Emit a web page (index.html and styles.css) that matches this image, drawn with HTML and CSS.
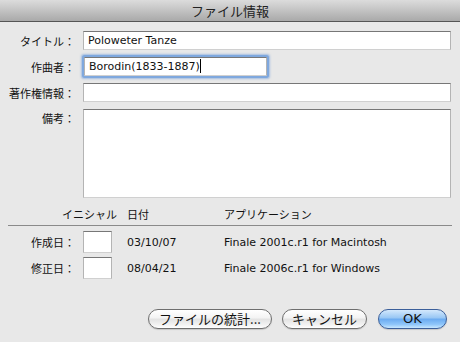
FILE: index.html
```html
<!DOCTYPE html>
<html lang="ja">
<head>
  <meta charset="UTF-8" />
  <meta name="viewport" content="width=device-width, initial-scale=1.0"/>
  <title>ファイル情報</title>
  <link rel="stylesheet" href="styles.css">
</head>
<body>
  <div class="dialog">
    <div class="titlebar">ファイル情報</div>

    <div class="form">
      <label class="label">タイトル：</label>
      <div class="field">Poloweter Tanze</div>

      <label class="label">作曲者：</label>
      <div class="field short focused">Borodin(1833-1887)<span class="caret"></span></div>

      <label class="label">著作権情報：</label>
      <div class="field"></div>

      <label class="label top">備考：</label>
      <div class="field notes"></div>
    </div>

    <div class="history">
      <div class="hist-head">
        <span></span>
        <span class="head-initial">イニシャル</span>
        <span>日付</span>
        <span>アプリケーション</span>
      </div>
      <div class="divider"></div>
      <div class="hist-row">
        <span class="label">作成日：</span>
        <span class="initial-box"></span>
        <span class="latin">03/10/07</span>
        <span class="latin">Finale 2001c.r1 for Macintosh</span>
      </div>
      <div class="hist-row">
        <span class="label">修正日：</span>
        <span class="initial-box"></span>
        <span class="latin">08/04/21</span>
        <span class="latin">Finale 2006c.r1 for Windows</span>
      </div>
    </div>

    <div class="buttons">
      <button class="btn stats">ファイルの統計...</button>
      <button class="btn cancel">キャンセル</button>
      <button class="btn ok">OK</button>
    </div>
  </div>
</body>
</html>
```

FILE: styles.css
```css
body {
  margin: 0;
  background: #e8e8e8;
  font-family: "DejaVu Sans", "Noto Sans CJK JP", sans-serif;
  color: #111;
}

.dialog {
  width: 460px;
  height: 342px;
  background: #e8e8e8;
  overflow: hidden;
}

.titlebar {
  height: 21px;
  line-height: 21px;
  border-bottom: 1px solid #555;
  background: linear-gradient(#dcdcdc, #a9a9a9);
  text-align: center;
  font-family: "Noto Sans CJK JP", sans-serif;
  font-size: 13px;
  color: #222;
}

.form {
  display: grid;
  grid-template-columns: 75px 1fr;
  column-gap: 8px;
  row-gap: 7px;
  padding: 9px 9px 0 0;
}

.label {
  font-family: "Noto Sans CJK JP", sans-serif;
  font-size: 11px;
  text-align: right;
  align-self: center;
  white-space: nowrap;
}

.label.top {
  align-self: start;
  padding-top: 1px;
}

.field {
  height: 19px;
  box-sizing: border-box;
  background: #fff;
  border: 1px solid #b4b4b4;
  border-top-color: #777;
  border-bottom-color: #d0d0d0;
  padding-left: 4px;
  font-size: 11px;
  line-height: 17px;
  white-space: nowrap;
}

.field.short {
  width: 183px;
  margin-left: 1px;
}

.field.focused {
  box-shadow: 0 0 0 2px #7fa8de, 0 0 2px 3px rgba(100, 150, 220, 0.5);
  border-radius: 1px;
}

.caret {
  display: inline-block;
  width: 1px;
  height: 14px;
  background: #000;
  vertical-align: -3px;
}

.field.notes {
  height: 89px;
}

.history {
  margin-top: 9px;
}

.hist-head,
.hist-row {
  display: grid;
  grid-template-columns: 75px 52px 97px 1fr;
  align-items: center;
}

.hist-head {
  font-family: "Noto Sans CJK JP", sans-serif;
  font-size: 11px;
  height: 18px;
  line-height: 15px;
  align-items: start;
}

.head-initial {
  grid-column: 1 / 3;
  text-align: right;
  padding-right: 10px;
}

.hist-head span:first-child {
  display: none;
}

.divider {
  height: 1px;
  margin: 0 8px;
  background: #8a8a8a;
}

.hist-row {
  height: 22px;
  margin-top: 5px;
}

.hist-row + .hist-row {
  margin-top: 4px;
}

.initial-box {
  width: 29px;
  height: 22px;
  box-sizing: border-box;
  margin-left: 8px;
  background: #fff;
  border: 1px solid #b4b4b4;
  border-top-color: #777;
  border-bottom-color: #d0d0d0;
}

.latin {
  font-size: 11px;
  white-space: nowrap;
}

.buttons {
  display: flex;
  justify-content: flex-end;
  gap: 10px;
  padding: 0 13px 0 0;
  margin-top: 30px;
}

.btn {
  height: 20px;
  padding: 0;
  border: 1px solid #6e6e6e;
  border-radius: 10px;
  background: linear-gradient(#ffffff, #f3f3f3 45%, #e2e2e2 50%, #f4f4f4 85%, #ffffff);
  font-family: "Noto Sans CJK JP", sans-serif;
  font-size: 13px;
  line-height: 18px;
  color: #111;
  box-shadow: 0 1px 1px rgba(0, 0, 0, 0.15);
}

.stats {
  width: 124px;
}

.cancel {
  width: 85px;
}

.ok {
  width: 69px;
  margin-left: 1px;
  border-color: #3b5f9a;
  background: linear-gradient(#d3e8fc, #97c6f4 45%, #6aaaf0 50%, #8fc6fa 80%, #c8e8ff);
  font-family: "DejaVu Sans", sans-serif;
}
```
